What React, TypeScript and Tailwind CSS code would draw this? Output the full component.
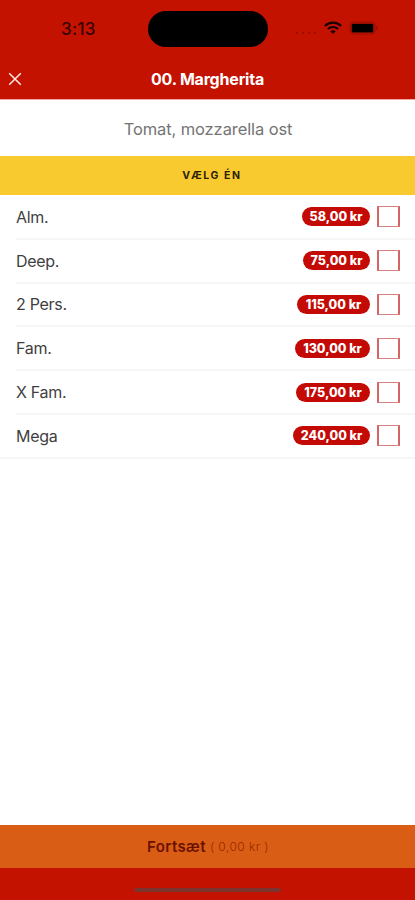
import { clsx } from "clsx";

const sizes = [
  { id: 1, name: "Alm.", price: "58,00 kr", width: "w-[68px]" },
  { id: 2, name: "Deep.", price: "75,00 kr", width: "w-[67px]" },
  { id: 3, name: "2 Pers.", price: "115,00 kr", width: "w-[73px]" },
  { id: 4, name: "Fam.", price: "130,00 kr", width: "w-[75px]" },
  { id: 5, name: "X Fam.", price: "175,00 kr", width: "w-[74px]" },
  { id: 6, name: "Mega", price: "240,00 kr", width: "w-[77px]" },
];

function WifiIcon() {
  return (
    <svg width="18" height="14" viewBox="0 0 18 14" fill="none" stroke="#160100" strokeWidth="2.1">
      <path d="M0.9 4.9C5.4 0.5 12.6 0.5 17.1 4.9" />
      <path d="M3.9 8.1C6.8 5.3 11.2 5.3 14.1 8.1" />
      <path d="M6.4 10.2C7.9 8.8 10.1 8.8 11.6 10.2L9 13Z" fill="#160100" stroke="none" />
    </svg>
  );
}

function BatteryIcon() {
  return (
    <svg width="30" height="14" viewBox="0 0 30 14">
      <rect x="1" y="1" width="25" height="12" rx="3.5" fill="none" stroke="#960e00" strokeWidth="1" />
      <rect x="2.7" y="2.8" width="21.6" height="8.6" rx="1.2" fill="#000" />
      <path d="M27.2 5C29 5.6 29 8.4 27.2 9Z" fill="#8a0c00" />
    </svg>
  );
}

function StatusBar() {
  return (
    <div className="grid grid-cols-[148px_120px_1fr] h-[58px] pt-[11px]">
      <div className="h-9 pl-[61px] text-[17px] leading-9 font-medium tracking-[0.3px] text-[#350300]">3:13</div>
      <div className="h-9 rounded-full bg-black" />
      <div className="flex h-9 pl-7">
        <div className="flex gap-[4px] pt-[21px] w-[28px]">
          {[0, 1, 2, 3].map((dot) => (
            <span key={dot} className="size-[2px] rounded-full bg-[#960a00]" />
          ))}
        </div>
        <div className="pt-[10px]">
          <WifiIcon />
        </div>
        <div className="pt-[10px] pl-[7px]">
          <BatteryIcon />
        </div>
      </div>
    </div>
  );
}

export default function App() {
  return (
    <div className="flex flex-col w-[415px] h-[900px] bg-white overflow-hidden font-['Inter',sans-serif]">
      {/* Header */}
      <header className="h-[100px] shrink-0 bg-[#c41200] border-b border-[#f3a7a1]">
        <StatusBar />
        <div className="grid grid-cols-[30px_1fr_30px] items-center h-[41px]">
          <svg className="ml-2" width="14" height="14" viewBox="0 0 14 14" stroke="#ffe9e6" strokeWidth="1.5">
            <path d="M1.2 1.2L12.8 12.8M12.8 1.2L1.2 12.8" />
          </svg>
          <h1 className="text-center text-[16px] font-bold tracking-[-0.2px] text-white">00. Margherita</h1>
        </div>
      </header>

      <p className="h-14 shrink-0 pl-px text-center text-[16.5px] leading-[58px] tracking-[-0.1px] text-[#747474]">
        Tomat, mozzarella ost
      </p>
      <div className="h-[39px] shrink-0 pl-[9px] bg-[#f9ca30] text-center text-[10.5px] leading-10 font-bold tracking-[1.6px] text-[#2b2205]">
        VÆLG ÉN
      </div>

      {/* Sizes */}
      <ul className="pt-px">
        {sizes.map((size, i) => (
          <li
            key={size.id}
            className={clsx("flex items-center h-[43.8px] pr-[15px] border-b-2 border-[#f6f6f6]", i === sizes.length - 1 ? "pl-4" : "ml-4")}
          >
            <span className="flex-1 text-[16px] tracking-[-0.3px] text-[#3f3f3f]">{size.name}</span>
            <span
              className={clsx("h-[19px] rounded-full bg-[#c40a05] text-center text-[12.5px] leading-[19px] font-extrabold text-white", size.width)}
            >
              {size.price}
            </span>
            <span className="ml-[7px] w-[23px] h-[21px] border-x-2 border-y border-x-[#d56464] border-y-[#d98080]" />
          </li>
        ))}
      </ul>

      {/* Footer */}
      <footer className="mt-auto">
        <button className="flex items-center justify-center w-full h-[43px] pt-px pl-px bg-[#d95d14]">
          <span className="text-[15px] font-semibold tracking-[0.4px] text-[#691000]">Fortsæt</span>
          <span className="ml-1 text-[12px] font-light tracking-[0.45px] text-[#992800]">( 0,00 kr )</span>
        </button>
        <div className="flex justify-center h-8 pt-5 bg-[#c41200]">
          <div className="w-[147px] h-1 rounded-full bg-[#7c3430]" />
        </div>
      </footer>
    </div>
  );
}
